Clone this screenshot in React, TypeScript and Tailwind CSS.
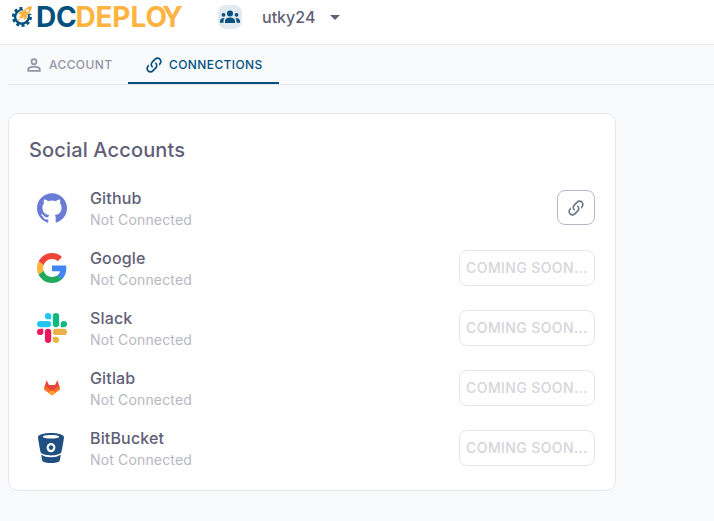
import React from 'react';
import { SiGithub } from 'react-icons/si';

const LINK =
  'M10.59,13.41C11,13.8 11,14.44 10.59,14.83C10.2,15.22 9.56,15.22 9.17,14.83C7.22,12.88 7.22,9.71 9.17,7.76V7.76L12.71,4.22C14.66,2.27 17.83,2.27 19.78,4.22C21.73,6.17 21.73,9.34 19.78,11.29L18.29,12.78C18.3,11.96 18.17,11.14 17.89,10.36L18.36,9.88C19.54,8.71 19.54,6.81 18.36,5.64C17.19,4.46 15.29,4.46 14.12,5.64L10.59,9.17C9.41,10.34 9.41,12.24 10.59,13.41M13.41,9.17C13.8,8.78 14.44,8.78 14.83,9.17C16.78,11.12 16.78,14.29 14.83,16.24V16.24L11.29,19.78C9.34,21.73 6.17,21.73 4.22,19.78C2.27,17.83 2.27,14.66 4.22,12.71L5.71,11.22C5.7,12.04 5.83,12.86 6.11,13.65L5.64,14.12C4.46,15.29 4.46,17.19 5.64,18.36C6.81,19.54 8.71,19.54 9.88,18.36L13.41,14.83C14.59,13.66 14.59,11.76 13.41,10.59C13,10.2 13,9.56 13.41,9.17Z';
const ACCOUNT =
  'M12,4A4,4 0 0,1 16,8A4,4 0 0,1 12,12A4,4 0 0,1 8,8A4,4 0 0,1 12,4M12,6A2,2 0 0,0 10,8A2,2 0 0,0 12,10A2,2 0 0,0 14,8A2,2 0 0,0 12,6M12,13C14.67,13 20,14.33 20,17V20H4V17C4,14.33 9.33,13 12,13M12,14.9C9.03,14.9 6.1,16.36 6.1,17V18.1H17.9V17C17.9,16.36 14.97,14.9 12,14.9Z';

function Glyph({ d, size }: { d: string; size: number }) {
  return (
    <svg width={size} height={size} viewBox="0 0 24 24" fill="currentColor" className="shrink-0">
      <path d={d} />
    </svg>
  );
}

function GearRocket() {
  return (
    <svg width="23" height="23" viewBox="0 0 23 23" className="mt-1 shrink-0">
      <circle cx="9.9" cy="12.9" r="8.7" fill="none" stroke="#04517f" strokeWidth="2.6" strokeDasharray="3 2.466" />
      <circle cx="9.9" cy="12.9" r="6.8" fill="none" stroke="#04517f" strokeWidth="2.4" />
      <path d="M12 0H23V9L18.5 10L11 6Z" fill="#fff" />
      <path d="M20 1.8C16.5 1.6 13.6 3.8 11.4 6.6L8 7.2L5.6 10.4L8.8 10.6L7.2 13.2L9.2 15.1L11.6 13.7L12.2 16.6L15.2 14L15.6 10.6C18.4 8.4 20.4 5.8 20 1.8Z" fill="#ffb340" stroke="#fff" strokeWidth="0.6" />
      <path d="M7 14.2L5 17L8.4 15.6Z" fill="#ffb340" />
      <circle cx="15.4" cy="6.6" r="1.4" fill="#fff" />
    </svg>
  );
}

function PeopleIcon() {
  return (
    <svg width="20" height="14" viewBox="0 0 20 14" fill="currentColor">
      <circle cx="10" cy="3.6" r="3" />
      <circle cx="3.5" cy="4.8" r="1.9" />
      <circle cx="16.5" cy="4.8" r="1.9" />
      <path d="M5 13V11.3C5 8.9 7.2 7.6 10 7.6S15 8.9 15 11.3V13Z" />
      <path d="M0 12.7V11.2C0 9 1.8 7.8 4.6 7.9C3.8 8.8 3.5 9.8 3.5 11V12.7Z" />
      <path d="M20 12.7V11.2C20 9 18.2 7.8 15.4 7.9C16.2 8.8 16.5 9.8 16.5 11V12.7Z" />
    </svg>
  );
}

function GoogleLogo() {
  return (
    <svg width="30" height="30" viewBox="0 0 48 48">
      <path fill="#EF4438" d="M24 9.5c3.54 0 6.71 1.22 9.21 3.6l6.85-6.85C35.9 2.38 30.47 0 24 0 14.62 0 6.51 5.38 2.56 13.22l7.98 6.19C12.43 13.72 17.74 9.5 24 9.5z" />
      <path fill="#4285F4" d="M46.98 24.55c0-1.57-.15-3.09-.38-4.55H24v9.02h12.94c-.58 2.96-2.26 5.48-4.78 7.18l7.73 6c4.51-4.18 7.09-10.36 7.09-17.65z" />
      <path fill="#FCB53B" d="M10.53 28.59c-.48-1.45-.76-2.99-.76-4.59s.27-3.14.76-4.59l-7.98-6.19C.92 16.46 0 20.12 0 24c0 3.88.92 7.54 2.56 10.78l7.97-6.19z" />
      <path fill="#22A95B" d="M24 48c6.48 0 11.93-2.13 15.89-5.81l-7.73-6c-2.15 1.45-4.92 2.3-8.16 2.3-6.26 0-11.57-4.22-13.47-9.91l-7.98 6.19C6.51 42.62 14.62 48 24 48z" />
    </svg>
  );
}

function SlackLogo() {
  return (
    <svg width="30" height="30" viewBox="0 0 24 24">
      <path fill="#E9175C" d="M5.042 15.165a2.528 2.528 0 0 1-2.52 2.523A2.528 2.528 0 0 1 0 15.165a2.527 2.527 0 0 1 2.522-2.52h2.52v2.52zM6.313 15.165a2.527 2.527 0 0 1 2.521-2.52 2.527 2.527 0 0 1 2.521 2.52v6.313A2.528 2.528 0 0 1 8.834 24a2.528 2.528 0 0 1-2.521-2.522v-6.313z" />
      <path fill="#22c5f4" d="M8.834 5.042a2.528 2.528 0 0 1-2.521-2.52A2.528 2.528 0 0 1 8.834 0a2.528 2.528 0 0 1 2.521 2.522v2.52H8.834zM8.834 6.313a2.528 2.528 0 0 1 2.521 2.521 2.528 2.528 0 0 1-2.521 2.521H2.522A2.528 2.528 0 0 1 0 8.834a2.528 2.528 0 0 1 2.522-2.521h6.312z" />
      <path fill="#10b981" d="M18.956 8.834a2.528 2.528 0 0 1 2.522-2.521A2.528 2.528 0 0 1 24 8.834a2.528 2.528 0 0 1-2.522 2.521h-2.522V8.834zM17.688 8.834a2.528 2.528 0 0 1-2.523 2.521 2.527 2.527 0 0 1-2.52-2.521V2.522A2.527 2.527 0 0 1 15.165 0a2.528 2.528 0 0 1 2.523 2.522v6.312z" />
      <path fill="#ECB24A" d="M15.165 18.956a2.528 2.528 0 0 1 2.523 2.522A2.528 2.528 0 0 1 15.165 24a2.527 2.527 0 0 1-2.52-2.522v-2.522h2.52zM15.165 17.688a2.527 2.527 0 0 1-2.52-2.523 2.526 2.526 0 0 1 2.52-2.52h6.313A2.527 2.527 0 0 1 24 15.165a2.528 2.528 0 0 1-2.522 2.523h-6.313z" />
    </svg>
  );
}

function GitlabLogo() {
  return (
    <svg width="30" height="30" viewBox="0 0 30 30">
      <path fill="#e5483a" d="M9.6 7.2L7 15L15 21.5L23 15L20.4 7.2L18 12H12Z" />
      <path fill="#fc6d26" d="M7.5 13.4L7 16.4L15 22.4L23 16.4L22.5 13.4L20 14L15 18.6L10 14Z" />
      <path fill="#fca326" d="M11.6 19.7L15 17.2L18.4 19.7L15 22.4Z" />
    </svg>
  );
}

function BitbucketLogo() {
  return (
    <svg width="30" height="30" viewBox="0 0 30 30">
      <path fill="#205081" fillRule="evenodd" d="M14 0C6.6 0 1 1.7 1 4C1 5.5 2.7 15.5 3.6 19.3C4.3 21.2 9 22.4 14 22.4S23.7 21.2 24.4 19.3C25.3 15.5 27 5.5 27 4C27 1.7 21.4 0 14 0ZM14 2C18.8 2 22.2 2.8 22.2 3.8S18.8 5.6 14 5.6S5.8 4.8 5.8 3.8S9.2 2 14 2ZM14 9.9A4.4 4.7 0 1 1 14 19.3A4.4 4.7 0 1 1 14 9.9Z" />
      <ellipse cx="14" cy="14.6" rx="2.2" ry="2.4" fill="#205081" />
      <path fill="#205081" d="M4.2 21.7C7 23.4 10 24.2 14 24.2S21 23.4 23.8 21.7C23.3 24.7 23 27 22.6 27.9C21.3 29.4 18 30 14 30S6.7 29.4 5.4 27.9C5 27 4.7 24.7 4.2 21.7Z" />
    </svg>
  );
}

const accounts = [
  { name: 'Github', logo: <SiGithub size={30} color="#6a7bd6" /> },
  { name: 'Google', logo: <GoogleLogo /> },
  { name: 'Slack', logo: <SlackLogo /> },
  { name: 'Gitlab', logo: <GitlabLogo /> },
  { name: 'BitBucket', logo: <BitbucketLogo /> },
];

export default function App() {
  return (
    <div className="h-[521px] w-[714px] overflow-hidden bg-[#f8fafc] font-['Inter',sans-serif] text-[#5f6076]">
      <header className="flex h-[45px] items-start border-b border-[#e6e8ec] bg-white pl-3">
        <div className="flex items-start">
          <GearRocket />
          <svg width="148" height="40" viewBox="0 0 148 40" className="shrink-0 font-['Inter',sans-serif] text-[28px] font-bold">
            <text x="1 21" y="26.8" fill="#04517f">DC</text>
            <text x="40.5 60.5 77.2 95.6 110.6 127.3" y="26.8" fill="#ffb340">DEPLOY</text>
          </svg>
        </div>
        <div className="ml-[35px] mt-[5px] flex size-6 items-center justify-center rounded-lg bg-[#e2eaf1] text-[#04517f]">
          <PeopleIcon />
        </div>
        <span className="ml-5 mt-[5px] text-base font-medium leading-6">utky24</span>
        <svg width="24" height="24" viewBox="0 0 24 24" fill="currentColor" className="ml-2 mt-[5px]">
          <path d="M7 10l5 5 5-5z" />
        </svg>
      </header>

      <nav className="ml-2 flex h-10 border-b border-[#e3e5e9] text-xs font-medium tracking-[0.4px]">
        <div className="flex w-[120px] items-center gap-[5px] pl-4 text-[#9495a4]">
          <Glyph d={ACCOUNT} size={20} />
          <span>ACCOUNT</span>
        </div>
        <div className="flex w-[151px] items-center gap-[5px] border-b-2 border-[#04517f] pl-4 pt-[2px] text-[#04517f]">
          <Glyph d={LINK} size={20} />
          <span>CONNECTIONS</span>
        </div>
      </nav>

      <main className="ml-2 mt-7 h-[378px] w-[608px] rounded-[10px] border border-[#e6e7ea] bg-white px-5">
        <h1 className="pt-5 text-xl font-medium leading-8 tracking-[0.15px]">Social Accounts</h1>
        <ul className="mt-3">
          {accounts.map(({ name, logo }, i) => (
            <li key={name} className="flex h-[60px] items-center">
              <div className="flex w-[46px] justify-center">{logo}</div>
              <div className="ml-[15px] flex-1">
                <p className="text-base font-medium leading-[22px] tracking-[0.15px]">{name}</p>
                <p className="text-sm leading-[21px] tracking-[0.15px] text-[#b7b8c1]">Not Connected</p>
              </div>
              {i === 0 ? (
                <button className="-mt-px flex h-[35px] w-[38px] items-center justify-center rounded-lg border border-[#b3b8cb] text-[#6d788d]">
                  <Glyph d={LINK} size={20} />
                </button>
              ) : (
                <button className="h-9 w-[136px] rounded-lg border border-[#e6e6e8] text-sm font-medium tracking-[0.4px] text-[#d5d6d9]">
                  COMING SOON...
                </button>
              )}
            </li>
          ))}
        </ul>
      </main>
    </div>
  );
}
